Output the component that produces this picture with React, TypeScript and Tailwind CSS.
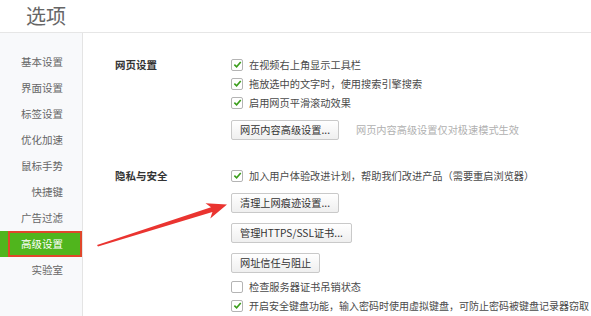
import React from 'react';

const font = { fontFamily: '"Noto Sans CJK SC", "Noto Sans", sans-serif' };

const navItems = ['基本设置', '界面设置', '标签设置', '优化加速', '鼠标手势', '快捷键', '广告过滤', '高级设置', '实验室'];

const Checkbox: React.FC<{ checked?: boolean }> = ({ checked }) => (
    <span className="w-[12px] h-[12px] shrink-0 rounded-[2px] border border-[#b4b4b4] bg-white flex items-center justify-center">
        {checked && (
            <svg width="9" height="9" viewBox="0 0 10 10">
                <path d="M1.5 5.2 L4 7.6 L8.6 2.2" fill="none" stroke="#3c9e1c" strokeWidth="1.8" />
            </svg>
        )}
    </span>
);

const CheckRow: React.FC<{ checked?: boolean; label: string }> = ({ checked, label }) => (
    <div className="h-[19px] flex items-center gap-[6px] text-[#4a4a4a]">
        <Checkbox checked={checked} />
        <span>{label}</span>
    </div>
);

const Btn: React.FC<{ children: React.ReactNode }> = ({ children }) => (
    <div className="h-[20px] px-[8px] flex items-center border border-[#c9c9c9] rounded-[2px] bg-gradient-to-b from-white to-[#efefef] text-[#333]">
        {children}
    </div>
);

export default function App() {
    return (
        <div className="relative w-[591px] h-[316px] overflow-hidden bg-white whitespace-nowrap text-[10.5px]" style={font}>
            <div className="h-[33px] border-b border-[#e6e6e6] flex items-center pl-[26px]">
                <span className="text-[20px] text-[#666] leading-none">选项</span>
            </div>

            <div className="flex h-[283px]">
                <div className="w-[83px] shrink-0 bg-[#f8f9fb] border-r border-[#e4e4e4] pt-[16px]">
                    {navItems.map((item) =>
                        item === '高级设置' ? (
                            <div key={item} className="relative h-[26px] bg-[#50b51d] text-white flex items-center justify-end pr-[19px]">
                                {item}
                                <div className="absolute left-[8px] right-0 top-0 bottom-0 border-2 border-[#e0472b]" />
                            </div>
                        ) : (
                            <div key={item} className="h-[26px] text-[#666] flex items-center justify-end pr-[19px]">
                                {item}
                            </div>
                        )
                    )}
                </div>

                <div className="flex-1 pl-[32px] pt-[22px] text-[10.2px]">
                    <div className="flex">
                        <div className="w-[116px] h-[19px] flex items-center font-bold text-[#333] text-[10.5px]">网页设置</div>
                        <div className="flex flex-col">
                            <CheckRow checked label="在视频右上角显示工具栏" />
                            <CheckRow checked label="拖放选中的文字时，使用搜索引擎搜索" />
                            <CheckRow checked label="启用网页平滑滚动效果" />
                            <div className="mt-[8px] flex items-center gap-[17px]">
                                <Btn>网页内容高级设置...</Btn>
                                <span className="text-[#b0b0b0]">网页内容高级设置仅对极速模式生效</span>
                            </div>
                        </div>
                    </div>

                    <div className="flex mt-[26px]">
                        <div className="w-[116px] h-[19px] flex items-center font-bold text-[#333] text-[10.5px]">隐私与安全</div>
                        <div className="flex flex-col items-start">
                            <CheckRow checked label="加入用户体验改进计划，帮助我们改进产品（需要重启浏览器）" />
                            <div className="mt-[8px]"><Btn>清理上网痕迹设置...</Btn></div>
                            <div className="mt-[10px]"><Btn>管理HTTPS/SSL证书...</Btn></div>
                            <div className="mt-[10px]"><Btn>网址信任与阻止</Btn></div>
                            <div className="mt-[4px]">
                                <CheckRow label="检查服务器证书吊销状态" />
                                <div className="text-[10px]">
                                    <CheckRow checked label="开启安全键盘功能，输入密码时使用虚拟键盘，可防止密码被键盘记录器窃取" />
                                </div>
                            </div>
                        </div>
                    </div>
                </div>
            </div>

            <svg className="absolute inset-0 pointer-events-none" width="591" height="316" viewBox="0 0 591 316">
                <polygon
                    points="97,245 211,207.3 205.5,203.3 227,204.5 210.3,218.6 212.4,212.1 98,246.5"
                    fill="#ea3430"
                />
            </svg>
        </div>
    );
}
